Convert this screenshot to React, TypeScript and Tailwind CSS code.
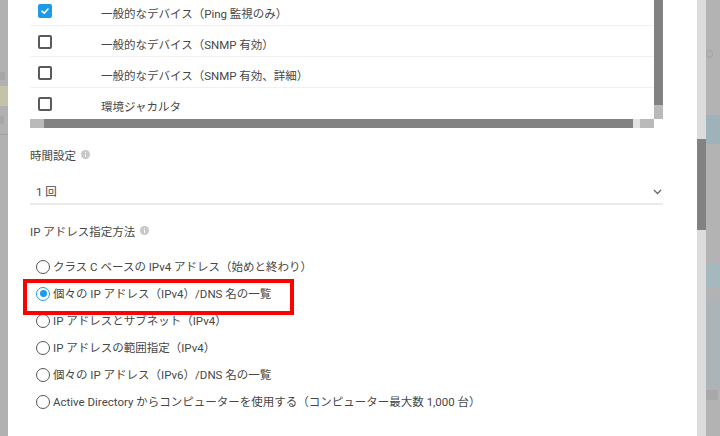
import React from "react";

const font = { fontFamily: 'Roboto, "Noto Sans CJK JP", sans-serif' };

function Checkbox({ checked }: { checked?: boolean }) {
  if (checked) {
    return (
      <div className="w-[14px] h-[14px] rounded-[2px] bg-[#1e9be6] flex items-center justify-center">
        <svg width="10" height="10" viewBox="0 0 10 10">
          <path d="M2 5.2 L4.2 7.2 L8 3" stroke="#fff" strokeWidth="1.6" fill="none" strokeLinecap="round" strokeLinejoin="round" />
        </svg>
      </div>
    );
  }
  return <div className="w-[14px] h-[14px] rounded-[2px] border-2 border-[#5a5a5a] bg-white" />;
}

function Radio({ checked }: { checked?: boolean }) {
  return (
    <div
      className={
        "w-[14px] h-[14px] rounded-full border-[1.5px] flex items-center justify-center shrink-0 " +
        (checked ? "border-[#1e9be6]" : "border-[#555]")
      }
    >
      {checked && <div className="w-[7px] h-[7px] rounded-full bg-[#1e9be6]" />}
    </div>
  );
}

function Info() {
  return (
    <svg width="9" height="9" viewBox="0 0 9 9" className="ml-[5px] mb-[3px]">
      <circle cx="4.5" cy="4.5" r="4.5" fill="#c8c8c8" />
      <rect x="4" y="4" width="1" height="3" fill="#fff" />
      <rect x="4" y="2" width="1" height="1" fill="#fff" />
    </svg>
  );
}

const rows = [
  { label: "一般的なデバイス（Ping 監視のみ）", checked: true },
  { label: "一般的なデバイス（SNMP 有効）" },
  { label: "一般的なデバイス（SNMP 有効、詳細）" },
  { label: "環境ジャカルタ" },
];

const radios = [
  "クラス C ベースの IPv4 アドレス（始めと終わり）",
  "個々の IP アドレス（IPv4）/DNS 名の一覧",
  "IP アドレスとサブネット（IPv4）",
  "IP アドレスの範囲指定（IPv4）",
  "個々の IP アドレス（IPv6）/DNS 名の一覧",
  "Active Directory からコンピューターを使用する（コンピューター最大数 1,000 台）",
];

export default function App() {
  return (
    <div className="w-[720px] h-[436px] overflow-hidden flex bg-[#b3b3b3] relative text-[#474747]" style={font}>
      {/* left overlay strip */}
      <div className="w-[8px] h-full bg-[#b1b1b1] flex flex-col">
        <div className="h-[72px]" />
        <div className="h-[8px] w-[5px] bg-[#a6a6a6]" />
        <div className="h-[20px] mt-[6px] bg-[#c4c2a8]" />
        <div className="h-[8px] w-[4px] mt-[10px] bg-[#a6a6a6]" />
        <div className="h-px bg-[#a0a0a0] mt-[10px]" />
      </div>

      {/* modal */}
      <div className="w-[689px] h-full bg-white flex flex-col pl-[22px]">
        {/* device table */}
        <div className="w-[633px] -mt-[5px] flex flex-col">
          <div className="flex">
            <div className="w-[624px] flex flex-col">
              {rows.map((r, i) => (
                <div
                  key={i}
                  className={"h-[31px] flex items-start " + (i < 3 ? "border-b border-[#f0f0f0]" : "")}
                >
                  <div className="w-[71px] pl-[8px] pt-[9px]">
                    <Checkbox checked={r.checked} />
                  </div>
                  <div className="pt-[11px] text-[11.5px] leading-[16px]">{r.label}</div>
                </div>
              ))}
            </div>
            <div className="w-[9px] flex flex-col">
              <div className="h-[110px] bg-[#828282]" />
              <div className="h-[14px] bg-[#bababa]" />
            </div>
          </div>
          <div className="flex h-[9px]">
            <div className="w-[14px] bg-[#bababa]" />
            <div className="w-[589px] bg-[#828282]" />
            <div className="w-[7px] bg-[#e2e2e2]" />
            <div className="w-[14px] bg-[#bababa]" />
            <div className="w-[9px] bg-white" />
          </div>
        </div>

        {/* time setting */}
        <div className="mt-[20px] flex items-center text-[11.5px] leading-[16px]">
          時間設定
          <Info />
        </div>
        <div className="w-[633px] mt-[20px] pb-[3px] border-b-2 border-[#ebebeb] flex items-center justify-between">
          <span className="pl-[6px] text-[11.5px] leading-[16px]">1 回</span>
          <svg width="9" height="6" viewBox="0 0 9 6" className="mr-[1px]">
            <path d="M1 1 L4.5 4.5 L8 1" stroke="#666" strokeWidth="1.3" fill="none" />
          </svg>
        </div>

        {/* IP method */}
        <div className="mt-[19px] flex items-center text-[11.5px] leading-[16px]">
          IP アドレス指定方法
          <Info />
        </div>
        <div className="mt-[13px] flex flex-col">
          {radios.map((t, i) => (
            <div key={i} className="h-[27px] flex items-center pl-[6px] gap-[3px]">
              <Radio checked={i === 1} />
              <span className="text-[11.5px] leading-[16px]">{t}</span>
            </div>
          ))}
        </div>
      </div>

      {/* modal scrollbar */}
      <div className="w-[9px] h-full bg-[#dcdcdc] flex flex-col">
        <div className="h-[139px]" />
        <div className="h-[91px] bg-[#828282]" />
      </div>

      {/* right overlay */}
      <div className="flex-1 h-full bg-[#b3b3b3] flex flex-col overflow-hidden">
        <div className="h-[46px]" />
        <div className="h-[16px] w-[10px] flex items-center">
          <div className="w-[7px] h-[8px] rounded-full border border-[#a0a0a0]" />
        </div>
        <div className="h-[53px]" />
        <div className="h-[29px] bg-[#9eb3b9]" />
        <div className="h-[120px]" />
        <div className="h-[24px] bg-[#a5b8bd]" />
        <div className="h-[10px]" />
        <div className="h-[90px] bg-[#adb4b8]" />
        <div className="h-[10px] mt-[2px] w-[12px] bg-[#a8a8a8]" />
      </div>

      {/* red annotation box */}
      <div className="absolute left-[23px] top-[279px] w-[271px] h-[36px] border-4 border-[#ff0000]" />
    </div>
  );
}
